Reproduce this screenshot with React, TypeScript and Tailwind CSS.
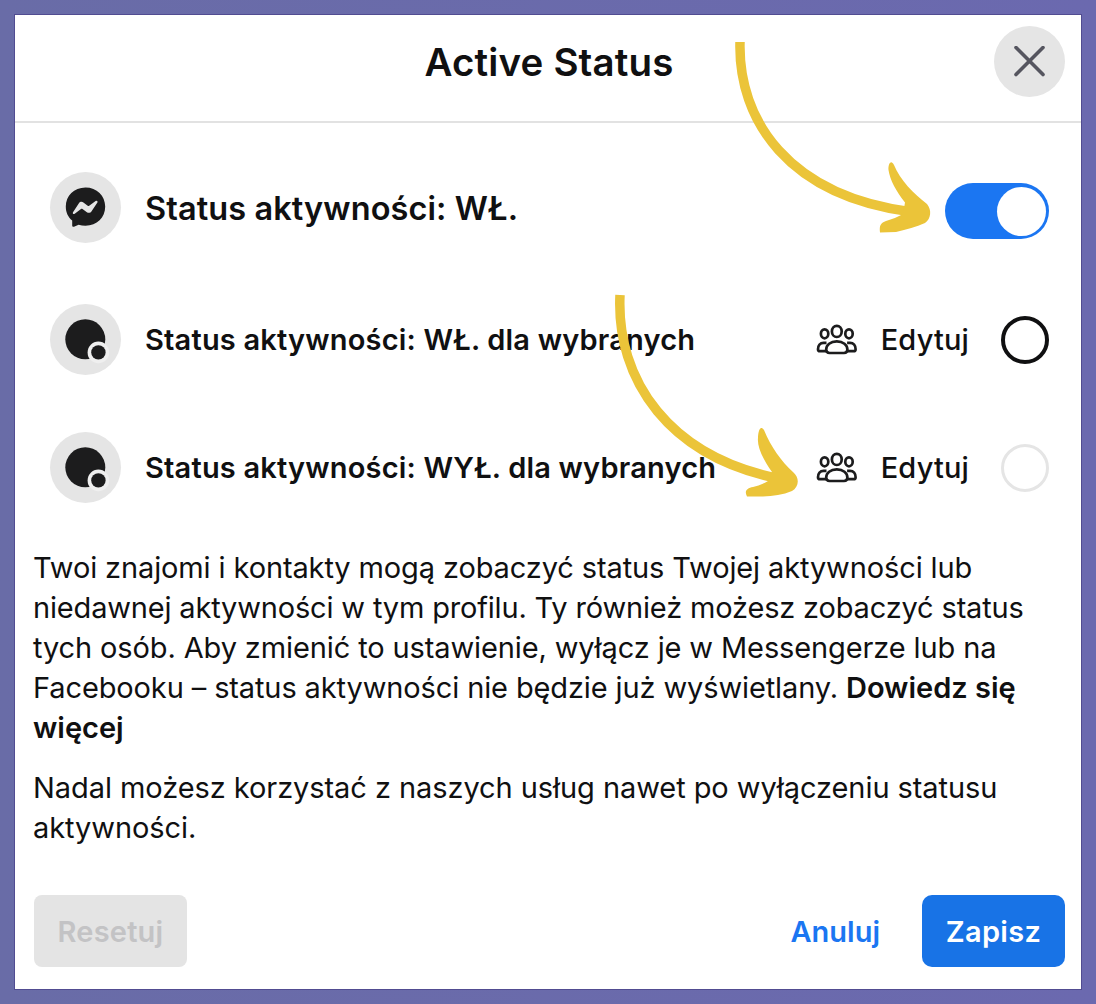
import type { ReactNode } from "react";

const people = (
  <svg width="42" height="32" viewBox="0 0 42 32" fill="none" stroke="#1c1c1d" strokeWidth="2.7">
    <ellipse cx="8.6" cy="9.8" rx="3.7" ry="4.5" />
    <ellipse cx="33" cy="9.8" rx="3.7" ry="4.5" />
    <ellipse cx="20.8" cy="7.4" rx="4.9" ry="5.6" />
    <path d="M10.5 18.8H7.6c-3.5 0-5.6 2.8-5.6 6.4 0 1.3.7 2 2 2h6" />
    <path d="M31.1 18.8H34c3.5 0 5.6 2.8 5.6 6.4 0 1.3-.7 2-2 2h-6" />
    <path d="M20.8 17.4c-6.3 0-10.6 3.4-10.6 8.2 0 2.2 1.2 3.4 3.4 3.4H28c2.2 0 3.4-1.2 3.4-3.4 0-4.8-4.3-8.2-10.6-8.2Z" />
  </svg>
);

const messenger = (
  <svg width="42" height="42" viewBox="0 0 42 42">
    <path
      d="M20.5 .4C9 .4.8 8.7.8 19.6c0 5.8 2.2 10.6 6.4 14v5c0 1 .9 1.5 1.8 1.1l4.6-2c2.2.7 4.5 1 6.9 1 11.3 0 19.7-8 19.7-19.1S31.8.4 20.5.4Z"
      fill="#1c1c1d"
    />
    <path d="M8 25.2l5.9-8.9c1.1-1.6 3-1.9 4.5-.8l4.3 3.2c.5.4 1 .4 1.5 0l6.4-4.8c1.2-.8 2.5.4 1.8 1.6l-6 8.900c-1.1 1.6-3 1.9-4.5.8L17.5 22c-.5-.4-1-.4-1.5 0l-6.3 4.700c-1.2.9-2.4-.3-1.7-1.5Z" fill="#e6e6e6" />
  </svg>
);

const presence = (
  <svg width="42" height="42" viewBox="0 0 42 42" overflow="visible">
    <circle cx="20.3" cy="20.3" r="20" fill="#1c1c1d" />
    <circle cx="33.4" cy="33.4" r="10.8" fill="#efefef" />
    <circle cx="33.4" cy="33.4" r="7.2" fill="#1c1c1d" />
  </svg>
);

function StatusRow({ icon, label, children }: { icon: ReactNode; label: ReactNode; children: ReactNode }) {
  return (
    <div className="flex h-[71px] items-center">
      <div className="flex size-[71px] shrink-0 items-center justify-center rounded-full bg-[#e5e5e5]">
        {icon}
      </div>
      <div className="ml-6 text-[29px] leading-[40px] font-semibold tracking-[0.19px] whitespace-nowrap">{label}</div>
      <div className="ml-auto flex items-center">{children}</div>
    </div>
  );
}

export default function App() {
  return (
    <main className="relative h-[1004px] w-[1096px] overflow-hidden bg-linear-to-r from-[#696ca7] to-[#6b69af] px-[15px] pt-[15px] pb-[15px] font-['Inter','Liberation_Sans',sans-serif] text-[#101011]">
      <section className="flex h-[974px] flex-col bg-white outline-1 outline-[#514c91]">
        <header className="grid h-[108px] grid-cols-[1fr_auto_1fr] border-b-2 border-[#e2e2e2]">
          <h1 className="col-start-2 pt-[23px] pl-0.5 text-[38.5px] leading-[48px] font-semibold tracking-[0.15px]">Active Status</h1>
          <button className="mt-[11px] mr-4 flex size-[71px] items-center justify-center justify-self-end rounded-full bg-[#e5e5e5]">
            <svg width="32" height="32" viewBox="0 0 32 32" stroke="#55555f" strokeWidth="3.6" strokeLinecap="round">
              <path d="M2 1.500L29 28.500M29 1.500L2 28.500" />
            </svg>
          </button>
        </header>

        <div className="pt-[49px] pr-8 pl-[35px]">
          <StatusRow
            icon={messenger}
            label={<p className="pt-[3px] text-[32.5px] tracking-[0.09px]">Status aktywności: WŁ.</p>}
          >
            <div className="mt-[7px] flex h-14 w-[104px] items-center justify-end rounded-full bg-[#1b76f2] pr-[3px]">
              <span className="size-[49px] rounded-full bg-white" />
            </div>
          </StatusRow>
          <div className="mt-[61px]">
            <StatusRow icon={presence} label="Status aktywności: WŁ. dla wybranych">
              {people}
              <span className="ml-[23px] text-[29px] leading-[40px] font-medium tracking-[0.15px]">Edytuj</span>
              <span className="ml-8 size-12 rounded-full border-4 border-[#101011]" />
            </StatusRow>
          </div>
          <div className="mt-[57px]">
            <StatusRow icon={presence} label="Status aktywności: WYŁ. dla wybranych">
              {people}
              <span className="ml-[23px] text-[29px] leading-[40px] font-medium tracking-[0.15px]">Edytuj</span>
              <span className="ml-8 size-12 rounded-full border-[3px] border-[#e5e5e5]" />
            </StatusRow>
          </div>
        </div>

        <div className="mt-[45px] flex flex-col gap-5 pl-[18px] text-[29px] leading-[40px] tracking-[-0.12px] whitespace-nowrap">
          <p>
            Twoi znajomi i kontakty mogą zobaczyć status Twojej aktywności lub
            <br />
            <span className="tracking-[-0.17px]">niedawnej aktywności w tym profilu. Ty również możesz zobaczyć status</span>
            <br />
            tych osób. Aby zmienić to ustawienie, wyłącz je w Messengerze lub na
            <br />
            Facebooku – status aktywności nie będzie już wyświetlany.{" "}
            <b className="font-semibold tracking-normal">Dowiedz się</b>
            <br />
            <b className="font-semibold tracking-normal">więcej</b>
          </p>
          <p className="tracking-[-0.07px]">
            Nadal możesz korzystać z naszych usług nawet po wyłączeniu statusu
            <br />
            aktywności.
          </p>
        </div>

        <footer className="mt-[47px] flex items-center pr-4 pl-[19px] text-[29px] leading-[40px] font-semibold">
          <button className="h-[72px] w-[153px] rounded-lg bg-[#e4e4e4] pt-0.5 tracking-[0.2px] text-[#c3c3c5]">Resetuj</button>
          <button className="ml-auto pt-0.5 text-[#1b76f2]">Anuluj</button>
          <button className="ml-[42px] h-[72px] w-[143px] rounded-[10px] bg-[#1873e6] pt-0.5 tracking-[0.3px] text-white">Zapisz</button>
        </footer>
      </section>

      {/* hand-drawn pointers over the switch and the second edit link */}
      <svg className="absolute top-10 left-[730px]" width="204" height="200" viewBox="0 0 204 200" fill="#ebc439">
        <path d="M10 2C8 80 58 156 182 172" fill="none" stroke="#ebc439" strokeWidth="9.500" />
        <path d="M175 162.500C166 151 160 140 158.500 130C158 124 161 119 164 125C170 140 184 154 197 164C202 170 201 179 195 183C186 187 177 189 166 192L150 192.500C149 185 151 183 156 181C162 179 168 177 173 174Z" />
      </svg>
      <svg className="absolute top-[293px] left-[610px]" width="204" height="210" viewBox="0 0 204 210" fill="#ebc439">
        <path d="M10 2C6 86 58 166 176 187" fill="none" stroke="#ebc439" strokeWidth="9.500" />
        <path d="M162 179C153 166 147 154 148 145C148 139 150 131 154 137C161 154 171 168 183 179C190 185 189 194 182 198C173 202 163 203 153 203.500L137 203.500C134 198 137 195 143 194C148 193 153 191 158 188Z" />
      </svg>
    </main>
  );
}
